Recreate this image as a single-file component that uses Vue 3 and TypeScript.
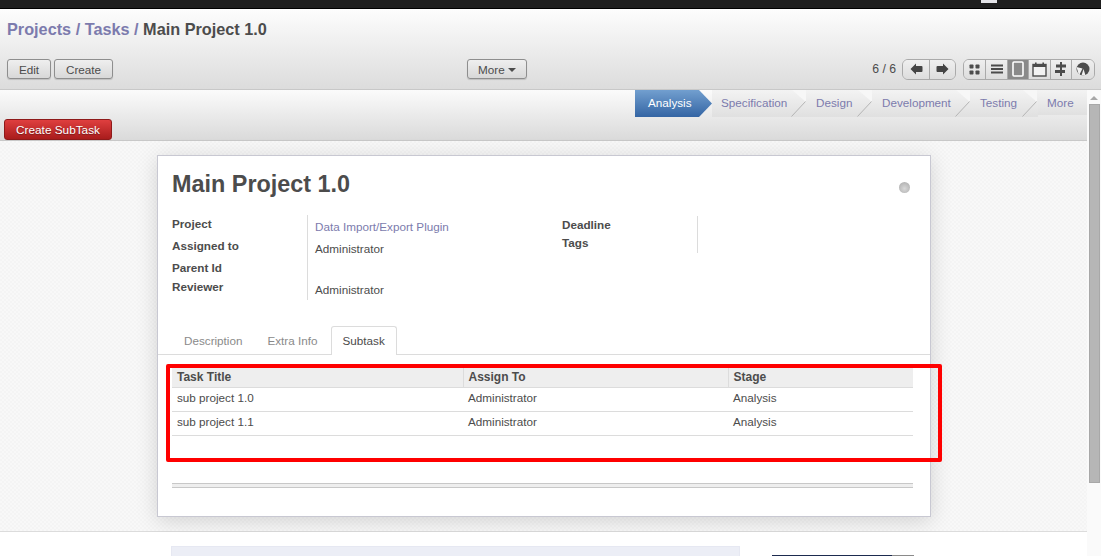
<script setup lang="ts">
const stages = [
  { name: 'Specification', width: 95 },
  { name: 'Design', width: 66 },
  { name: 'Development', width: 98 },
  { name: 'Testing', width: 67 },
]

const leftFields = [
  { label: 'Project', value: 'Data Import/Export Plugin', link: true },
  { label: 'Assigned to', value: 'Administrator' },
  { label: 'Parent Id', value: '' },
  { label: 'Reviewer', value: 'Administrator' },
]

const subtasks = [
  { title: 'sub project 1.0', user: 'Administrator', stage: 'Analysis' },
  { title: 'sub project 1.1', user: 'Administrator', stage: 'Analysis' },
]
</script>

<template>
  <div class="page">
    <div class="topbar"><span class="tile"></span></div>

    <header class="header">
      <h2 class="crumbs">
        <a>Projects</a> <span class="sep">/</span> <a>Tasks</a> <span class="sep">/</span> Main Project 1.0
      </h2>
      <div class="actions">
        <div class="left-actions">
          <button class="btn edit">Edit</button>
          <button class="btn create">Create</button>
        </div>
        <button class="btn more">More <i class="caret"></i></button>
        <div class="right-actions">
          <span class="pager">6 / 6</span>
          <div class="group pager-btns">
            <button>
              <svg width="13" height="12" viewBox="0 0 13 12"><path d="M0.5 6 6 0.5V3H11.5Q12.5 3 12.5 4V8Q12.5 9 11.5 9H6V11.5Z" fill="#444" /></svg>
            </button>
            <button>
              <svg width="13" height="12" viewBox="0 0 13 12"><path d="M12.5 6 7 0.5V3H1.5Q0.5 3 0.5 4V8Q0.5 9 1.5 9H7V11.5Z" fill="#444" /></svg>
            </button>
          </div>
          <div class="group views">
            <button style="width: 21px">
              <svg width="11" height="11" viewBox="0 0 11 11" fill="#4c4c4c">
                <rect x="0.5" y="0.5" width="4" height="4" rx="0.8" />
                <rect x="6.5" y="0.5" width="4" height="4" rx="0.8" />
                <rect x="0.5" y="6.5" width="4" height="4" rx="0.8" />
                <rect x="6.5" y="6.5" width="4" height="4" rx="0.8" />
              </svg>
            </button>
            <button style="width: 22px">
              <svg width="12" height="10" viewBox="0 0 12 10" fill="#4c4c4c">
                <rect y="0.5" width="12" height="2" />
                <rect y="4" width="12" height="2" />
                <rect y="7.5" width="12" height="2" />
              </svg>
            </button>
            <button class="active" style="width: 21px">
              <svg width="12" height="16" viewBox="0 0 12 16">
                <rect x="1" y="1" width="10" height="14" rx="1" fill="#8a8a8a" stroke="#fff" stroke-width="1.6" />
              </svg>
            </button>
            <button style="width: 22px">
              <svg width="15" height="15" viewBox="0 0 15 15">
                <rect x="1" y="2.5" width="13" height="11.5" fill="#f2f2f2" stroke="#4c4c4c" stroke-width="1.4" />
                <rect x="1" y="2" width="13" height="3" fill="#4c4c4c" />
                <rect x="3" y="0.5" width="1.6" height="3" fill="#4c4c4c" />
                <rect x="10.4" y="0.5" width="1.6" height="3" fill="#4c4c4c" />
              </svg>
            </button>
            <button style="width: 21px">
              <svg width="12" height="14" viewBox="0 0 12 14" fill="#4c4c4c">
                <rect x="5" y="0" width="2" height="14" />
                <path d="M1 2.5H11V5.5H1Z" />
                <path d="M0 8H10V11H0Z" />
              </svg>
            </button>
            <button style="width: 23px">
              <svg width="14" height="14" viewBox="0 0 14 14">
                <circle cx="7" cy="7" r="6.5" fill="#4c4c4c" />
                <path d="M6.5 6.5 3 13.5 0.5 5Z" fill="#f0f0f0" />
                <path d="M7.5 7 9.5 13.5H5.5Z" fill="#f0f0f0" />
              </svg>
            </button>
          </div>
        </div>
      </div>
    </header>

    <div class="body-row">
      <div class="main">
        <div class="statusbar">
          <div class="stages">
            <div class="stage current">Analysis</div>
            <div v-for="s in stages" :key="s.name" class="stage" :style="{ width: s.width + 'px' }">
              {{ s.name }}
              <svg class="slash" width="27" height="27" viewBox="0 0 27 27">
                <path d="M13 0 27 12 27 0Z" fill="#f7f7f7" />
                <path d="M12.5 26.5 26.5 11.5" stroke="#b5b5b5" fill="none" />
              </svg>
            </div>
            <div class="stage last">More</div>
          </div>
          <div class="button-row">
            <button class="btn-red">Create SubTask</button>
          </div>
        </div>

        <div class="content">
          <div class="sheet">
            <div class="title-row">
              <h1>Main Project 1.0</h1>
              <span class="dot"></span>
            </div>

            <div class="groups">
              <div class="fields left-group">
                <template v-for="f in leftFields" :key="f.label">
                  <label>{{ f.label }}</label>
                  <span class="value" :class="{ link: f.link }">{{ f.value }}</span>
                </template>
              </div>
              <div class="fields right-group">
                <label>Deadline</label>
                <span class="value"></span>
                <label>Tags</label>
                <span class="value"></span>
              </div>
            </div>

            <ul class="tabs">
              <li>Description</li>
              <li>Extra Info</li>
              <li class="on">Subtask</li>
            </ul>

            <table class="grid">
              <colgroup>
                <col style="width: 291px" />
                <col style="width: 265px" />
                <col />
              </colgroup>
              <thead>
                <tr>
                  <th>Task Title</th>
                  <th>Assign To</th>
                  <th>Stage</th>
                </tr>
              </thead>
              <tbody>
                <tr v-for="t in subtasks" :key="t.title">
                  <td>{{ t.title }}</td>
                  <td>{{ t.user }}</td>
                  <td>{{ t.stage }}</td>
                </tr>
              </tbody>
            </table>

            <div class="double-rule"></div>
          </div>
        </div>

        <div class="footer">
          <div class="note"></div>
          <div class="dark-box"><span></span></div>
        </div>
      </div>

      <div class="scrollbar">
        <i class="up"></i>
        <div class="thumb"></div>
      </div>
    </div>

    <!-- annotation from the screenshot -->
    <div class="red-box"></div>
  </div>
</template>

<style>
html,
body {
  margin: 0;
  overflow: hidden;
}
</style>

<style scoped>
.page {
  position: relative;
  width: 1101px;
  height: 556px;
  overflow: hidden;
  font-family: "Liberation Sans", Arial, sans-serif;
  font-size: 11.7px;
  color: #4c4c4c;
  background: #fff;
}

.topbar {
  height: 8px;
  background: #1f1f1f;
  border-bottom: 1px solid #000;
  position: relative;
}

.tile {
  position: absolute;
  left: 981px;
  top: 0;
  width: 16px;
  height: 3px;
  background: #e4e4e8;
}

.header {
  height: 81px;
  box-sizing: border-box;
  background: linear-gradient(#fdfdfd, #dcdcdc);
  border-bottom: 1px solid #c8c8c8;
  padding-top: 10px;
}

.crumbs {
  margin: 0;
  padding-left: 7px;
  font-size: 16.25px;
  line-height: 20px;
  font-weight: bold;
  color: #4c4c4c;
}

.crumbs a,
.crumbs .sep {
  color: #7c7bad;
}

.actions {
  display: flex;
  align-items: flex-start;
  margin-top: 19px;
  padding-left: 7px;
  padding-right: 6px;
}

.left-actions {
  width: 460px;
  display: flex;
  gap: 3px;
  padding-top: 1px;
}

.btn {
  height: 20px;
  box-sizing: border-box;
  padding: 0;
  border: 1px solid #8e8e8e;
  border-radius: 3px;
  background: linear-gradient(#efefef, #d8d8d8);
  box-shadow: 0 1px 1px rgba(0, 0, 0, 0.15);
  font: inherit;
  color: #4c4c4c;
}

.edit {
  width: 44px;
}

.create {
  width: 59px;
}

.more {
  width: 60px;
  margin-top: 1px;
}

.caret {
  display: inline-block;
  width: 0;
  height: 0;
  border: 4px solid transparent;
  border-top: 4px solid #4c4c4c;
  border-bottom: 0;
  vertical-align: 2px;
}

.right-actions {
  margin-left: auto;
  display: flex;
  align-items: center;
  height: 22px;
}

.pager {
  margin-right: 6px;
  color: #4c4c4c;
  font-size: 12.2px;
}

.group {
  display: flex;
  height: 21px;
  box-sizing: border-box;
  border: 1px solid #aaa;
  border-radius: 6px;
  overflow: hidden;
}

.group button {
  display: flex;
  align-items: center;
  justify-content: center;
  padding: 0;
  border: 0;
  border-left: 1px solid #aaa;
  background: linear-gradient(#efefef, #dddddd);
}

.group button:first-child {
  border-left: 0;
}

.pager-btns {
  margin-right: 7px;
}

.pager-btns button {
  width: 26px;
}

.group .active {
  background: #8a8a8a;
}

.body-row {
  display: flex;
  height: 467px;
}

.main {
  width: 1087px;
  display: flex;
  flex-direction: column;
}

.statusbar {
  flex: none;
  height: 51px;
  box-sizing: border-box;
  background: linear-gradient(#fbfbfb, #dadada);
  border-bottom: 1px solid #c8c8c8;
}

.stages {
  display: flex;
  justify-content: flex-end;
  height: 27px;
}

.stage {
  position: relative;
  box-sizing: border-box;
  height: 27px;
  line-height: 26px;
  padding-left: 9px;
  color: #7c7bad;
  background: linear-gradient(#f3f3f3, #e0e0e0);
}

.stage.current {
  width: 77px;
  padding-left: 13px;
  color: #fff;
  background: linear-gradient(#729fcf, #3465a4);
  clip-path: polygon(0 0, 64px 0, 100% 50%, 64px 100%, 0 100%);
}

.stage.last {
  width: 49px;
  height: 25px;
  padding-left: 9px;
}

.slash {
  position: absolute;
  right: 1px;
  top: 0;
}

.button-row {
  padding: 2px 0 0 4px;
}

.btn-red {
  width: 108px;
  height: 21px;
  box-sizing: border-box;
  padding: 0;
  border: 1px solid #8e1a1a;
  border-radius: 3px;
  background: linear-gradient(#df3f3f, #a91c1c);
  font: inherit;
  font-size: 11.8px;
  color: #fff;
  text-shadow: 0 1px 1px rgba(0, 0, 0, 0.35);
}

.content {
  flex: none;
  height: 391px;
  box-sizing: border-box;
  padding: 14px 0 0 157px;
  background: repeating-conic-gradient(#f4f4f4 0 25%, #f8f8f8 0 50%) 0 0 / 4px 4px;
  border-bottom: 1px solid #dcdcdc;
}

.sheet {
  width: 774px;
  height: 362px;
  box-sizing: border-box;
  background: #fff;
  border: 1px solid #c8c8d2;
  box-shadow: 0 4px 20px rgba(0, 0, 0, 0.15);
}

.title-row {
  display: flex;
  justify-content: space-between;
  padding: 13px 20px 0 14px;
  height: 46px;
  box-sizing: content-box;
}

.title-row h1 {
  margin: 0;
  font-size: 23.4px;
  line-height: 30px;
  font-weight: bold;
}

.dot {
  width: 11px;
  height: 11px;
  margin-top: 13px;
  border-radius: 50%;
  background: radial-gradient(circle at 50% 60%, #d8d8d8, #a8a8a8);
}

.groups {
  display: flex;
  padding-left: 14px;
}

.fields {
  display: grid;
  grid-template-columns: 136px auto;
  align-content: start;
}

.fields label {
  line-height: 18px;
  font-weight: bold;
  border-right: 1px solid #dcdcdc;
}

.value {
  padding: 3px 0 0 7px;
  line-height: 18px;
}

.value.link {
  color: #7c7bad;
}

.left-group {
  width: 390px;
  grid-template-rows: 22px 22px 19px 22px;
}

.right-group {
  grid-template-rows: 18px 19px;
  padding-top: 1px;
}

.tabs {
  display: flex;
  gap: 1px;
  list-style: none;
  margin: 26px 0 0;
  padding: 0 0 0 14px;
  height: 28px;
  border-bottom: 1px solid #dcdcdc;
}

.tabs li {
  height: 28px;
  box-sizing: border-box;
  padding: 0 11px;
  line-height: 27px;
  color: #8a8a8a;
  border: 1px solid transparent;
  border-bottom: 0;
}

.tabs li.on {
  height: 29px;
  color: #4c4c4c;
  background: #fff;
  border-color: #dcdcdc;
  border-radius: 3px 3px 0 0;
}

.grid {
  width: 741px;
  margin: 13px 0 0 14px;
  border-collapse: collapse;
  table-layout: fixed;
}

.grid th {
  height: 19px;
  padding: 0 0 0 5px;
  box-sizing: border-box;
  text-align: left;
  font-size: 12px;
  font-weight: bold;
  background: #eee;
  border-bottom: 1px solid #dcdcdc;
  border-left: 1px solid #dcdcdc;
}

.grid th:first-child {
  border-left: 0;
}

.grid td {
  padding: 0 0 4px 5px;
  box-sizing: border-box;
  border-bottom: 1px solid #dcdcdc;
}

.grid tbody tr td {
  height: 24px;
}

.double-rule {
  width: 741px;
  height: 3px;
  margin: 47px 0 0 14px;
  background: #eee;
  border-top: 1px solid #c8c8c8;
  border-bottom: 1px solid #c8c8c8;
}

.footer {
  flex: 1;
  min-height: 0;
  display: flex;
  align-items: flex-start;
  padding: 14px 0 0 171px;
  background: #fff;
}

.note {
  width: 569px;
  height: 20px;
  background: #eceef6;
  border: 1px solid #e6e8f2;
  box-sizing: border-box;
}

.dark-box {
  width: 142px;
  height: 2px;
  margin: 9px 0 0 32px;
  background: #8a8a8a;
}

.dark-box span {
  display: block;
  width: 120px;
  height: 2px;
  background: #1d2b4f;
}

.scrollbar {
  width: 14px;
  box-sizing: border-box;
  padding-left: 2px;
  background: #fafafa;
  position: relative;
}

.up {
  position: absolute;
  left: 3px;
  top: 6px;
  width: 0;
  height: 0;
  border: 4px solid transparent;
  border-top: 0;
  border-bottom: 4px solid #a8a8a8;
}

.thumb {
  width: 11px;
  height: 379px;
  margin-top: 14px;
  box-sizing: border-box;
  background: #b6b6b6;
  border: 1px solid #a8a8a8;
}

.red-box {
  position: absolute;
  left: 166px;
  top: 364px;
  width: 776px;
  height: 98px;
  box-sizing: border-box;
  border: 4px solid #f00;
  border-radius: 2px;
}
</style>
